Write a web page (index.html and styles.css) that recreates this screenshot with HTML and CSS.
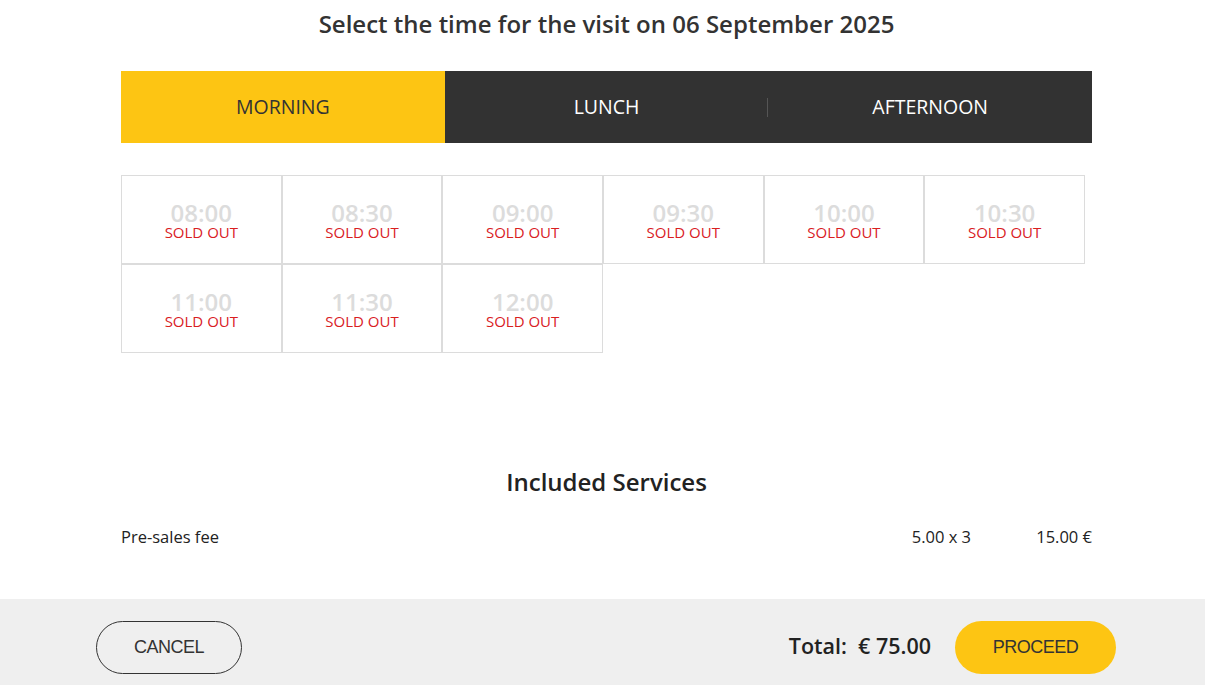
FILE: index.html
```html
<!DOCTYPE html>
<html>
<head>
<meta charset="utf-8">
<link rel="stylesheet" href="styles.css">
</head>
<body>
<div class="page">
  <div class="content">
    <h1 class="title">Select the time for the visit on 06 September 2025</h1>
    <div class="tabs">
      <div class="tab active">MORNING</div>
      <div class="tab">LUNCH</div>
      <div class="tab sep">AFTERNOON</div>
    </div>
    <div class="slots">
      <div class="slot"><span class="time">08:00</span><span class="sold">SOLD OUT</span></div>
      <div class="slot"><span class="time">08:30</span><span class="sold">SOLD OUT</span></div>
      <div class="slot"><span class="time">09:00</span><span class="sold">SOLD OUT</span></div>
      <div class="slot"><span class="time">09:30</span><span class="sold">SOLD OUT</span></div>
      <div class="slot"><span class="time">10:00</span><span class="sold">SOLD OUT</span></div>
      <div class="slot"><span class="time">10:30</span><span class="sold">SOLD OUT</span></div>
      <div class="slot"><span class="time">11:00</span><span class="sold">SOLD OUT</span></div>
      <div class="slot"><span class="time">11:30</span><span class="sold">SOLD OUT</span></div>
      <div class="slot"><span class="time">12:00</span><span class="sold">SOLD OUT</span></div>
    </div>
    <h2 class="services-title">Included Services</h2>
    <div class="service-row">
      <span class="service-name">Pre-sales fee</span>
      <span class="service-qty">5.00 x 3</span>
      <span class="service-price">15.00 €</span>
    </div>
  </div>
  <div class="footer">
    <div class="footer-inner">
      <button class="btn cancel">CANCEL</button>
      <div class="footer-right">
        <span class="total">Total:&nbsp; € 75.00</span>
        <button class="btn proceed">PROCEED</button>
      </div>
    </div>
  </div>
</div>
</body>
</html>
```
FILE: styles.css
```css
* { box-sizing: border-box; }
html, body { margin: 0; padding: 0; background: #fff; }
body { font-family: "Open Sans", "Liberation Sans", sans-serif; color: #333; }
.page { width: 1205px; height: 685px; overflow: hidden; display: flex; flex-direction: column; }
.content { width: 971px; margin-left: 121px; flex: 1; }
.title { margin: 0; padding-top: 7px; height: 71px; font-size: 24px; font-weight: 600; text-align: center; color: #333; line-height: 34px; }
.tabs { display: flex; height: 72px; background: #323232; }
.tab { flex: 1; display: flex; align-items: center; justify-content: center; font-size: 19.5px; color: #fff; position: relative; padding-bottom: 2px; }
.tab.active { background: #fdc513; color: #333; }
.tab.sep::before { content: ""; position: absolute; left: -1px; top: 27px; height: 19px; width: 1px; background: #555; }
.slots { margin-top: 32px; display: grid; grid-template-columns: repeat(6, 160.67px); }
.slot { height: 89px; border: 1px solid #dcdcdc; display: flex; flex-direction: column; align-items: center; justify-content: center; padding-top: 1px; }
.time { font-size: 24px; font-weight: 600; color: #dcdcdc; line-height: 24px; }
.sold { font-size: 15px; color: #d9201f; line-height: 15px; }
.services-title { margin: 112px 0 0; font-size: 24px; font-weight: 600; text-align: center; color: #222; line-height: 34px; }
.service-row { display: flex; margin-top: 27px; font-size: 16.5px; color: #222; line-height: 22px; }
.service-name { flex: 1; }
.service-qty { width: 100px; text-align: right; }
.service-price { width: 121px; text-align: right; }
.footer { height: 86px; background: #efefef; flex: none; }
.footer-inner { width: 1020px; margin-left: 96px; height: 100%; display: flex; align-items: center; justify-content: space-between; padding-top: 10px; }
.footer-right { display: flex; align-items: center; gap: 24px; }
.total { font-size: 21.5px; font-weight: 600; color: #222; margin-top: -3px; }
.btn { font-family: "Liberation Sans", Arial, sans-serif; font-size: 18px; height: 53px; border-radius: 27px; color: #333; cursor: pointer; letter-spacing: -0.5px; }
.cancel { width: 146px; background: transparent; border: 1px solid #333; }
.proceed { width: 161px; background: #fdc513; border: none; }
```
